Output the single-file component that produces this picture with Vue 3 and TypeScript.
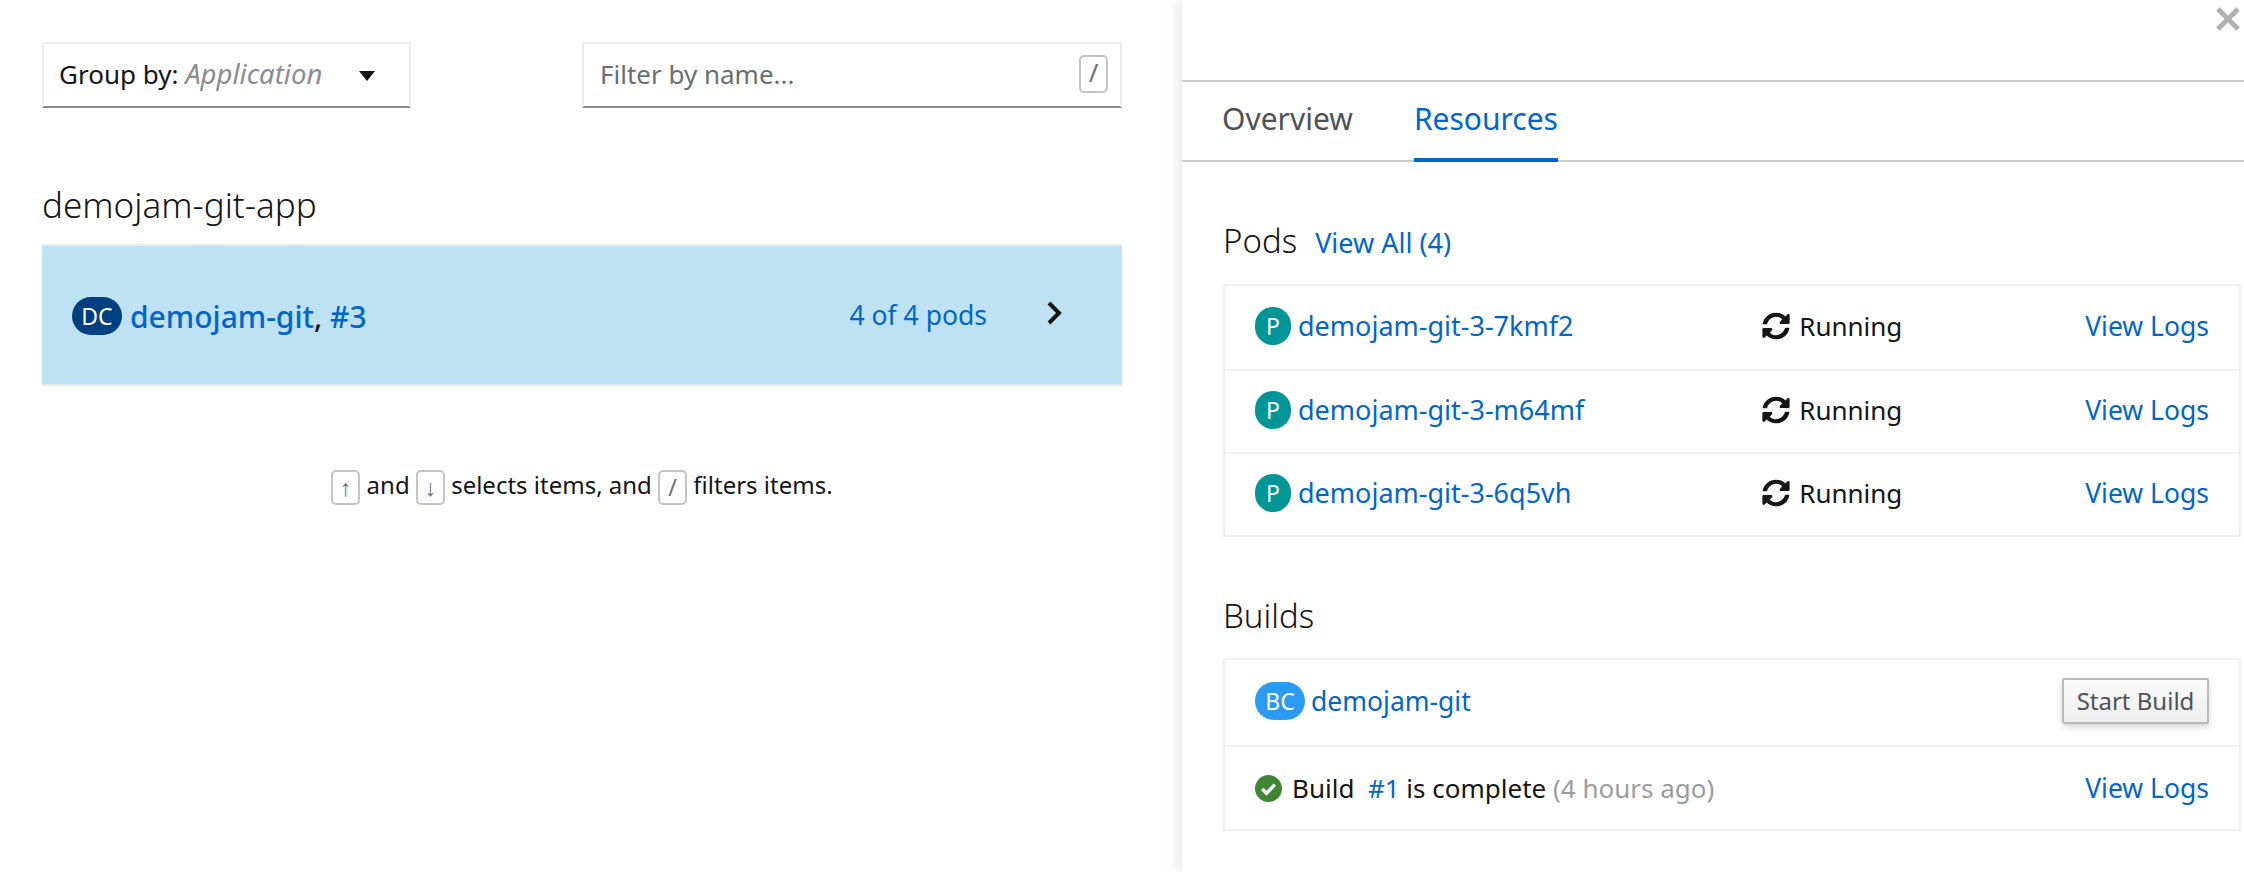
<script setup lang="ts">
const pods = ['demojam-git-3-7kmf2', 'demojam-git-3-m64mf', 'demojam-git-3-6q5vh']
</script>

<template>
  <div class="page">
    <main class="left">
      <div class="toolbar">
        <div class="group-by">
          <span>Group by: <em>Application</em></span>
          <span class="caret"></span>
        </div>
        <div class="filter">
          <span>Filter by name...</span>
          <kbd class="key slash">/</kbd>
        </div>
      </div>
      <h2 class="app-name">demojam-git-app</h2>
      <div class="deploy-row">
        <span class="badge dc">DC</span>
        <span class="deploy-name"><a>demojam-git</a>, <a>#3</a></span>
        <a class="pod-count">4 of 4 pods</a>
        <svg class="chevron" viewBox="0 0 16 26" width="16" height="26">
          <path d="M3 3l10 10L3 23" fill="none" stroke="#151515" stroke-width="4" />
        </svg>
      </div>
      <p class="hint">
        <kbd class="key">↑</kbd> and <kbd class="key">↓</kbd> selects items, and
        <kbd class="key">/</kbd> filters items.
      </p>
    </main>

    <aside class="drawer">
      <button class="close" aria-label="Close">
        <svg viewBox="0 0 24 24" width="24" height="24">
          <path d="M2 2l20 20M22 2L2 22" stroke="#b0b0b0" stroke-width="5" />
        </svg>
      </button>
      <div class="tabs">
        <span class="tab">Overview</span>
        <span class="tab active">Resources</span>
      </div>
      <div class="content">
        <div class="section-head">
          <h3>Pods</h3>
          <a>View All (4)</a>
        </div>
        <ul class="list">
          <li v-for="pod in pods" :key="pod" class="item">
            <span class="name-cell">
              <span class="badge p">P</span>
              <a>{{ pod }}</a>
            </span>
            <span class="status">
              <svg viewBox="0 0 512 512" width="28" height="28">
                <path fill="#151515" d="M370.7 133.3A168 168 0 0 0 93 215.5c-1 5.800-6 10.500-12 10.500H24c-7.500 0-13.200-6.800-11.800-14.200C33.600 98.300 133.900 12 255.800 12c66.800 0 127.500 26.300 172 69.100L464 44.900c15.100-15.100 41-4.400 41 17V196c0 13.300-10.700 24-24 24H346.900c-21.400 0-32.100-25.900-17-41l40.800-45.700zM31 292h134.100c21.400 0 32.100 25.900 17 41l-40.800 45.700a168 168 0 0 0 277.700-82.200c1-5.800 6-10.500 12-10.500h57c7.500 0 13.200 6.800 11.800 14.200C478.400 413.700 378.100 500 256.200 500c-66.800 0-127.500-26.300-172-69.100L48 467.100C32.900 482.200 7 471.500 7 450.100V316c0-13.300 10.700-24 24-24z" />
              </svg>
              Running
            </span>
            <a class="logs">View Logs</a>
          </li>
        </ul>

        <div class="section-head builds-head">
          <h3>Builds</h3>
        </div>
        <ul class="list">
          <li class="item tall">
            <span class="name-cell bc-cell">
              <span class="badge bc">BC</span>
              <a>demojam-git</a>
            </span>
            <button class="start-build">Start Build</button>
          </li>
          <li class="item last">
            <span class="name-cell build-status">
              <svg viewBox="0 0 28 28" width="27" height="27">
                <circle cx="14" cy="14" r="14" fill="#3e8635" />
                <path d="M7.500 14.500l4.500 4.500 8.500-9" fill="none" stroke="#fff" stroke-width="3.600" />
              </svg>
              <span>Build&nbsp; <a>#1</a> is complete <span class="muted">(4 hours ago)</span></span>
            </span>
            <a class="logs">View Logs</a>
          </li>
        </ul>
      </div>
    </aside>
  </div>
</template>

<style>
html,
body {
  margin: 0;
  background: #fff;
  overflow: hidden;
}
</style>

<style scoped>
.page {
  display: grid;
  grid-template-columns: 1182px 1fr;
  width: 2244px;
  height: 872px;
  overflow: hidden;
  font-family: 'Noto Sans', 'Open Sans', sans-serif;
  font-size: 26px;
  color: #151515;
}
a {
  color: #06c;
}
.left {
  padding: 42px 60px 0 42px;
}
.toolbar {
  display: flex;
  justify-content: space-between;
}
.group-by,
.filter {
  box-sizing: border-box;
  height: 66px;
  display: flex;
  align-items: center;
  justify-content: space-between;
  border: 2px solid #ededed;
  border-bottom-color: #8a8d90;
}
.group-by {
  width: 369px;
  padding: 0 34px 3px 15px;
}
.group-by em {
  color: #8a8d90;
  font-size: 27.500px;
}
.caret {
  margin-top: 5px;
  border: 8px solid transparent;
  border-top: 10px solid #151515;
  border-bottom: 0;
}
.filter {
  width: 540px;
  padding: 0 0 3px 16px;
  color: #6a6e73;
}
.key {
  display: inline-block;
  box-sizing: border-box;
  width: 29px;
  height: 35px;
  border: 2px solid #c4c4c4;
  border-radius: 5px;
  text-align: center;
  font-family: inherit;
  font-size: 23px;
  line-height: 30px;
  color: #6a6e73;
  vertical-align: middle;
}
.slash {
  height: 38px;
  margin-right: 12px;
  font-size: 26px;
}
.app-name {
  margin: 75px 0 17px;
  font-size: 35px;
  font-weight: 300;
  line-height: 44px;
}
.deploy-row {
  box-sizing: border-box;
  height: 142px;
  display: flex;
  align-items: center;
  padding: 2px 31px 0 30px;
  background: #bee1f4;
  border-top: 2px solid #e8e8e8;
  border-bottom: 2px solid #e8e8e8;
}
.badge {
  display: inline-flex;
  align-items: center;
  justify-content: center;
  height: 38px;
  border-radius: 19px;
  color: #fff;
  font-size: 23px;
  flex: none;
}
.dc {
  width: 50px;
  background: #004080;
}
.deploy-name {
  flex: 1;
  margin-left: 8px;
  font-size: 30px;
  font-weight: 500;
}
.pod-count {
  margin: 0 59px 2px 0;
  font-size: 26.500px;
}
.chevron {
  margin: 0 29px 6px 0;
}
.hint {
  margin: 82px 0 0;
  text-align: center;
  font-size: 24px;
}
.drawer {
  position: relative;
  box-shadow: -6px 0 12px rgba(3, 3, 3, 0.08);
  background: #fff;
}
.close {
  position: absolute;
  top: 7px;
  right: 4px;
  padding: 0;
  border: 0;
  background: none;
}
.tabs {
  box-sizing: border-box;
  display: flex;
  gap: 61px;
  height: 82px;
  margin-top: 80px;
  padding: 0 0 0 40px;
  border-top: 2px solid #ccc;
  border-bottom: 2px solid #ccc;
}
.tab {
  margin-bottom: -2px;
  padding-top: 16px;
  font-size: 30px;
  color: #4f5255;
}
.tab.active {
  color: #06c;
  border-bottom: 4px solid #06c;
}
.content {
  padding: 57px 3px 0 41px;
}
.section-head {
  display: flex;
  align-items: baseline;
  gap: 18px;
  height: 65px;
}
.section-head h3 {
  margin: 0;
  font-size: 33px;
  font-weight: 300;
  line-height: 44px;
}
.section-head a {
  font-size: 27px;
}
.builds-head {
  margin-top: 57px;
  height: 64px;
}
.list {
  margin: 0;
  padding: 0;
  list-style: none;
  border: 2px solid #f0f0f0;
}
.item {
  box-sizing: border-box;
  height: 83px;
  display: flex;
  align-items: center;
  padding: 0 30px 4px;
}
.item.tall {
  height: 85px;
}
.item.last {
  height: 84px;
  padding-bottom: 0;
}
.item + .item {
  border-top: 2px solid #f0f0f0;
}
.name-cell {
  flex: 1;
  display: flex;
  align-items: center;
  gap: 7px;
  font-size: 27px;
}
.bc-cell {
  gap: 6px;
  font-size: 26.500px;
}
.p {
  width: 36px;
  background: #009596;
}
.bc {
  width: 50px;
  background: #2b9af3;
}
.status {
  display: flex;
  align-items: center;
  gap: 9px;
  width: 323px;
}
.logs {
  font-size: 26.500px;
}
.start-build {
  width: 147px;
  height: 46px;
  border: 2px solid #b8bbbe;
  border-radius: 2px;
  background: linear-gradient(#fafafa, #ededed);
  box-shadow: 0 3px 6px rgba(3, 3, 3, 0.16);
  font-family: inherit;
  font-size: 24px;
  color: #4f5255;
}
.build-status {
  gap: 10px;
  font-size: 26px;
}
.muted {
  color: #9c9c9c;
}
</style>
